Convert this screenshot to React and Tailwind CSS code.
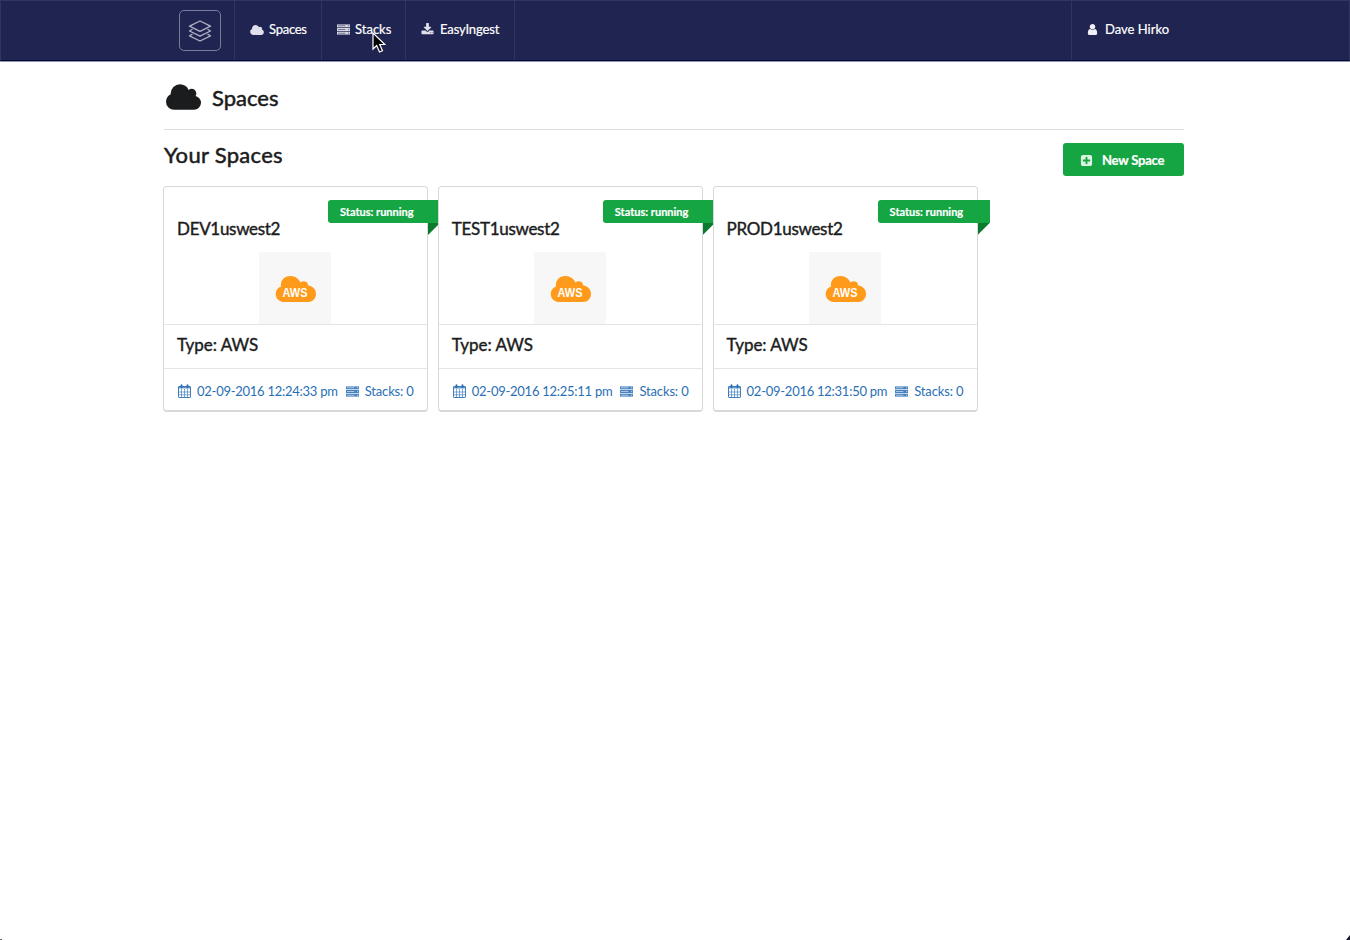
const CLOUD =
  'M1984 1152q0 159-112.5 271.5t-271.5 112.5h-1088q-185 0-316.5-131.5t-131.5-316.5q0-132 71-241.5t187-163.5q-2-28-2-43 0-212 150-362t362-150q158 0 286.5 88t187.5 230q70-62 166-62 106 0 181 75t75 181q0 75-41 138 129 30 213 134.5t84 239.5z';
const SERVER =
  'M128 1408h1024v-128h-1024v128zm0-512h1024v-128h-1024v128zm1568 448q0-40-28-68t-68-28-68 28-28 68 28 68 68 28 68-28 28-68zm-1568-960h1024v-128h-1024v128zm1568 448q0-40-28-68t-68-28-68 28-28 68 28 68 68 28 68-28 28-68zm0-512q0-40-28-68t-68-28-68 28-28 68 28 68 68 28 68-28 28-68zm96 832v384h-1792v-384h1792zm0-512v384h-1792v-384h1792zm0-512v384h-1792v-384h1792z';
const DOWNLOAD =
  'M1344 1344q0-26-19-45t-45-19-45 19-19 45 19 45 45 19 45-19 19-45zm256 0q0-26-19-45t-45-19-45 19-19 45 19 45 45 19 45-19 19-45zm128-224v320q0 40-28 68t-68 28h-1472q-40 0-68-28t-28-68v-320q0-40 28-68t68-28h465l135 136q58 56 136 56t136-56l136-136h464q40 0 68 28t28 68zm-325-569q17 41-14 70l-448 448q-18 19-45 19t-45-19l-448-448q-31-29-14-70 17-39 59-39h256v-448q0-26 19-45t45-19h256q26 0 45 19t19 45v448h256q42 0 59 39z';
const USER =
  'M1536 1399q0 109-62.5 187t-150.5 78h-854q-88 0-150.5-78t-62.5-187q0-85 8.5-160.5t31.5-152 58.5-131 94-89 134.5-34.5q131 128 313 128t313-128q76 0 134.5 34.5t94 89 58.5 131 31.5 152 8.5 160.5zm-256-887q0 159-112.5 271.5t-271.5 112.5-271.5-112.5-112.5-271.5 112.5-271.5 271.5-112.5 271.5 112.5 112.5 271.5z';
const PLUS_SQUARE =
  'M1408 960v-128q0-26-19-45t-45-19h-320v-320q0-26-19-45t-45-19h-128q-26 0-45 19t-19 45v320h-320q-26 0-45 19t-19 45v128q0 26 19 45t45 19h320v320q0 26 19 45t45 19h128q26 0 45-19t19-45v-320h320q26 0 45-19t19-45zm256-544v960q0 119-84.5 203.5t-203.5 84.5h-960q-119 0-203.5-84.5t-84.5-203.5v-960q0-119 84.5-203.5t203.5-84.5h960q119 0 203.5 84.5t84.5 203.5z';

function Icon({ d, box = '0 0 1792 1792', className }) {
  return (
    <svg viewBox={box} className={`shrink-0 ${className}`} fill="currentColor" aria-hidden="true">
      <path d={d} />
    </svg>
  );
}

function ServerIcon({ className }) {
  return (
    <svg viewBox="0 128 1792 1408" className={`shrink-0 ${className}`} fill="currentColor" aria-hidden="true">
      <path d="M0 128h1792v384H0zM0 640h1792v384H0zM0 1152h1792v384H0z" opacity="0.4" />
      <path d={SERVER} opacity="0.8" />
    </svg>
  );
}

function CalendarIcon({ className }) {
  return (
    <svg viewBox="0 0 13 14" className={`shrink-0 ${className}`} fill="none" stroke="currentColor" aria-hidden="true">
      <rect x="0.5" y="2.5" width="12" height="11" rx="0.6" strokeWidth="0.9" />
      <path d="M0.5 3.500h12" strokeWidth="2" opacity="0.7" />
      <path d="M0.5 8h12M0.5 10.800h12M3.5 5v8.5M6.5 5v8.5M9.5 5v8.5" strokeWidth="0.6" />
      <path d="M3.5 1.200v2M9.5 1.200v2" strokeWidth="1.9" strokeLinecap="round" />
    </svg>
  );
}

const spaces = [
  { name: 'DEV1uswest2', created: '02-09-2016 12:24:33 pm', stacks: 0 },
  { name: 'TEST1uswest2', created: '02-09-2016 12:25:11 pm', stacks: 0 },
  { name: 'PROD1uswest2', created: '02-09-2016 12:31:50 pm', stacks: 0 },
];

function NavBar() {
  return (
    <header className="h-[61px] bg-[#202450] border-t border-x border-[#32365f] border-b border-b-[#07083a] shadow-[0_1px_0_#9294b0] text-white text-[13px] [-webkit-text-stroke:0.2px]">
      <nav className="ml-[163px] w-[1021px] h-full flex items-stretch">
        <div className="w-[71px] pl-[15px] flex items-center border-r border-[#32365f]">
          <div className="w-[42px] h-[41px] border border-[#797c99] rounded-[5px] flex items-center justify-center pr-px">
            <svg viewBox="0 0 24 24" className="w-6 h-6" fill="none" stroke="#b0b2c6" strokeWidth="1.3" strokeLinejoin="round">
              <path d="M12 2 22.5 7.2 12 12.4 1.5 7.2z" />
              <path d="M4.5 10.300 1.500 12 12 17.200 22.500 12l-3-1.700" />
              <path d="M4.500 15.100 1.500 16.800 12 22 22.500 16.800l-3-1.700" />
            </svg>
          </div>
        </div>
        <a className="w-[87px] pb-[2px] pl-[15px] flex items-center border-r border-[#32365f]">
          <Icon d={CLOUD} box="64 128 1920 1408" className="w-[14px] h-[10px] mr-[5px] text-[#dfe0ea]" />
          <span className="pt-px tracking-[-0.02em]">Spaces</span>
        </a>
        <a className="w-[84px] pb-[2px] pl-[15px] flex items-center border-r border-[#32365f] relative">
          <ServerIcon className="w-[13px] h-[11px] mr-[5px] text-[#f0f0f6]" />
          <span className="pt-px">Stacks</span>
          {/* mouse pointer */}
          <svg viewBox="0 0 14 21" className="absolute left-[50px] top-[31px] w-[14px] h-[21px]">
            <path d="M1 1v16l3.700-3.500 2.800 6.500 3-1.300-2.800-6.200h5.200z" fill="#000" stroke="#fff" strokeWidth="1.200" />
          </svg>
        </a>
        <a className="w-[109px] pb-[2px] pl-[15px] flex items-center border-r border-[#32365f]">
          <Icon d={DOWNLOAD} className="w-[13px] h-[13px] mr-[6px] text-[#dfe0ea]" />
          <span className="pt-px tracking-[-0.01em]">EasyIngest</span>
        </a>
        <a className="ml-auto w-[114px] pb-[2px] pl-[14px] flex items-center border-l border-[#32365f]">
          <Icon d={USER} className="w-[13px] h-[13px] mr-[6px] text-[#f0f0f5]" />
          <span className="pt-px">Dave Hirko</span>
        </a>
      </nav>
    </header>
  );
}

function SpaceCard({ space }) {
  return (
    <div className="relative w-[265px] h-[226px] shrink-0 rounded-[4px] border border-[#d8d8d9] border-b-2 bg-white flex flex-col">
      <div className="h-[65px] pl-[13px] pt-[30px] text-[17px] leading-6 tracking-[-0.3px] [-webkit-text-stroke:0.4px]">{space.name}</div>
      {/* status ribbon with the folded corner below it */}
      <div className="absolute right-[-13px] top-[13px] w-[112px] h-[23px] bg-[#16a543] rounded-l-[3px] pl-3 text-[11px] leading-[23px] font-bold text-white whitespace-nowrap [-webkit-text-stroke:0.2px]">
        Status: running
        <span className="absolute right-0 top-full w-3 h-3 bg-[#0b7a2d] [clip-path:polygon(0_0,100%_0,0_100%)]"></span>
      </div>
      <div className="w-[72px] h-[72px] ml-[95px] bg-[#f7f7f7] flex items-center justify-center pt-[2px] pl-px">
        <svg viewBox="0 0 41 26" className="w-[41px] h-[26px]">
          <path d="M8 26a8 8 0 0 1-2-15.500C5 4 10 0 15.500 0c5 0 8.500 3 10 6.500 3-2.500 7.500-1 7.700 3C38 10 41 13.500 41 18c0 4.500-3.500 8-8 8z" fill="#ff9a1a" />
          <text x="20" y="21" textAnchor="middle" textLength="25" lengthAdjust="spacingAndGlyphs" className="font-['Liberation_Sans'] text-[13.500px] font-bold" fill="#fff">AWS</text>
        </svg>
      </div>
      <div className="h-[45px] border-y border-[#e5e5e6] pl-[13px] text-[17px] leading-[40px] tracking-[-0.02px] [-webkit-text-stroke:0.4px]">Type: AWS</div>
      <div className="flex-1 flex items-center px-[14px] pt-[4px] text-[13px] text-[#2a6fb5] whitespace-nowrap">
        <CalendarIcon className="w-[13px] h-[14px] mr-[6px] -mt-px" />
        <span className="tracking-[-0.26px]">{space.created}</span>
        <ServerIcon className="w-[13px] h-[11px] ml-2 mr-[6px] -mt-px" />
        <span className="tracking-[-0.15px]">Stacks: {space.stacks}</span>
      </div>
    </div>
  );
}

export default function App() {
  return (
    <div className="relative h-[940px] overflow-hidden bg-white font-['Lato',sans-serif] text-[#1b1c1d]">
      <NavBar />
      <main className="ml-[163px] mt-px w-[1021px]">
        <div className="ml-px h-[68px] border-b border-[#dededf] flex items-center">
          <Icon d={CLOUD} box="64 128 1920 1408" className="w-[35px] h-[26px] ml-[2px] mt-[3px] mr-[11px]" />
          <h1 className="text-[22px] pt-[3px] [-webkit-text-stroke:0.5px]">Spaces</h1>
        </div>
        <div className="h-[56px] pt-[13px] flex justify-between items-start">
          <h2 className="ml-px text-[22px] leading-6 tracking-[0.3px] [-webkit-text-stroke:0.5px]">Your Spaces</h2>
          <button className="w-[121px] h-[33px] rounded-[3px] bg-[#16a543] text-white text-[13px] font-bold flex items-center pl-[17px] pt-px">
            <Icon d={PLUS_SQUARE} className="w-[13px] h-[13px] mr-[9px] text-[#dcf5e3]" />
            <span className="pt-px tracking-[-0.2px] [-webkit-text-stroke:0.2px]">New Space</span>
          </button>
        </div>
        <div className="flex gap-[9.8px]">
          {spaces.map((space) => (
            <SpaceCard key={space.name} space={space} />
          ))}
        </div>
      </main>
      {/* rounded window corners */}
      <span className="absolute left-0 bottom-0 w-[2px] h-px bg-[#666]"></span>
      <span className="absolute right-0 bottom-0 w-[4px] h-[5px] bg-[#15162b] [clip-path:polygon(100%_0,100%_100%,0_100%)]"></span>
    </div>
  );
}
